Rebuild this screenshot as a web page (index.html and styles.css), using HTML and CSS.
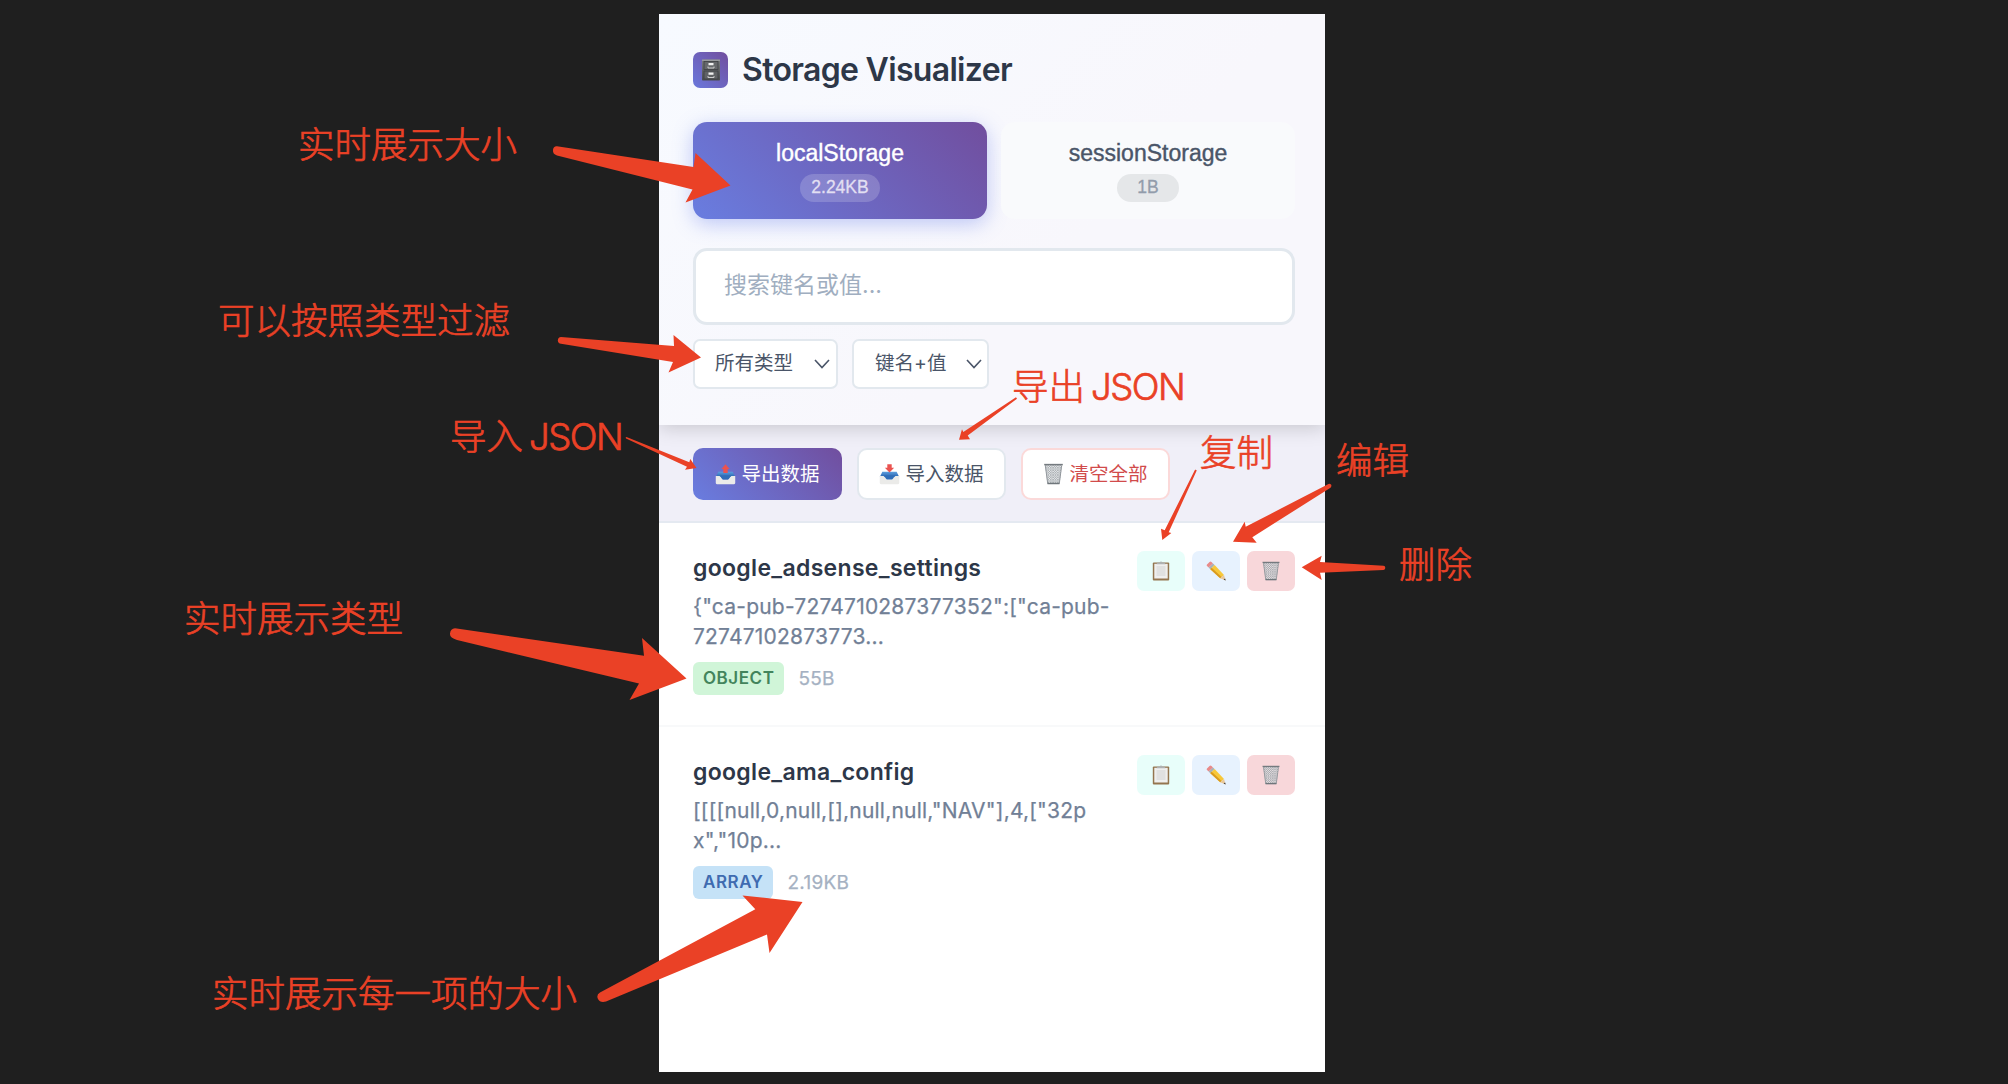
FILE: index.html
```html
<!DOCTYPE html>
<html lang="zh-CN">
<head>
<meta charset="utf-8">
<title>Storage Visualizer</title>
<link rel="stylesheet" href="styles.css">
</head>
<body>
<svg class="sprite" aria-hidden="true">
  <defs>
    <linearGradient id="steel" x1="0" x2="0" y1="0" y2="1"><stop offset="0" stop-color="#7b7d80"/><stop offset="1" stop-color="#4a4c4f"/></linearGradient>
    <linearGradient id="blue" x1="0" x2="0" y1="0" y2="1"><stop offset="0" stop-color="#5d9fe0"/><stop offset="1" stop-color="#2a66b0"/></linearGradient>
    <pattern id="mesh" width="2.4" height="2.4" patternUnits="userSpaceOnUse"><path d="M0 0L2.4 2.4M2.4 0L0 2.4" stroke="#8d9499" stroke-width=".5"/></pattern>
    <symbol id="cabinet" viewBox="0 0 20 22">
      <rect x="1" y=".5" width="18" height="21" rx=".8" fill="url(#steel)"/>
      <path d="M1 1.2h18" stroke="#a7a9ab" stroke-width="1"/>
      <rect x="3" y="2.5" width="14" height="8" fill="#66686b" stroke="#3d3f42" stroke-width=".8"/>
      <rect x="3" y="12" width="14" height="8" fill="#606265" stroke="#3d3f42" stroke-width=".8"/>
      <path d="M7.5 4h5v2.2h-5zM7.5 13.5h5v2.2h-5z" fill="#f1f1f1"/>
      <path d="M7 7.5v1.5h6V7.5M7 17v1.5h6V17" fill="none" stroke="#c9cacb" stroke-width="1"/>
    </symbol>
    <symbol id="tray" viewBox="0 0 22 22">
      <path d="M3.500 8h15l2.700 5.500H.8z" fill="url(#blue)"/>
      <path d="M.8 12.500H5c1.500 0 2 3.800 4 3.800h4c2 0 2.500-3.800 4-3.800h4.200v7.500q0 1.200-1.200 1.200H2Q.8 21.200.8 20z" fill="#ebebe9"/>
      <path d="M3.500 12h15c-2.500 0-3.500 4.300-5.500 4.300H9c-2 0-3-4.300-5.500-4.300z" fill="#2f6db8"/>
    </symbol>
    <symbol id="outbox" viewBox="0 0 22 22">
      <use href="#tray"/>
      <path d="M11 .3L15.300 5.200H13.300V9.300H8.700V5.200H6.700z" fill="#ea5350"/>
    </symbol>
    <symbol id="inbox" viewBox="0 0 22 22">
      <use href="#tray"/>
      <path d="M8.700 .3h4.600v3.700h2.600L11 8.800 6.100 4h2.600z" fill="#ea5350"/>
    </symbol>
    <symbol id="basket" viewBox="0 0 20 22">
      <path d="M1.500 2h17L16 21H4z" fill="#dfe2e4" fill-opacity=".75"/>
      <path d="M1.500 2h17L16 21H4z" fill="url(#mesh)"/>
      <path d="M1.800 2.500L4.200 20.500M18.200 2.500L15.800 20.500" stroke="#8b9196" stroke-width=".9"/>
      <path d="M.7 1.600h18.600" stroke="#747a7f" stroke-width="1.500"/>
      <path d="M4 20.500h12" stroke="#6f767b" stroke-width="1.500"/>
    </symbol>
    <symbol id="clipboard" viewBox="0 0 18 20">
      <rect x=".8" y="1.500" width="16.400" height="18" rx="1" fill="#94754f"/>
      <rect x="2.300" y="2.800" width="13.400" height="14.700" fill="#efefee"/>
      <path d="M4.500 6h9M4.500 8h9M4.500 10h9M4.500 12h9M4.500 14h9" stroke="#d2d3d3" stroke-width="1"/>
      <path d="M4.500 3.200h9l-1-1.700H10.500Q9-.4 7.500 1.500H5.500z" fill="#aeb1b2"/>
    </symbol>
    <symbol id="pencil" viewBox="0 0 20 20">
      <path d="M1 3.500L3.500 1Q4.500 0 5.500 1L7 2.500 2.700 6.500 1 5Q.2 4.200 1 3.500z" fill="#e98a8a"/>
      <path d="M2.700 6.500L7 2.500 8.600 4.100 4.300 8.200z" fill="#a9b0b5"/>
      <path d="M4.300 8.200L8.600 4.100 18 14 14.200 17.200z" fill="#f7c83a"/>
      <path d="M4.300 8.200L5.700 6.800 15.500 16.100 14.200 17.200z" fill="#d99a1f"/>
      <path d="M14.200 17.200L18 14 19.600 19.400z" fill="#e8c79a"/>
      <path d="M17.600 18.600L19.100 17.500 19.700 19.600z" fill="#333"/>
    </symbol>
  </defs>
</svg>

<main class="panel">
  <header class="header">
    <div class="brand">
      <span class="logo"><svg width="20" height="22"><use href="#cabinet"/></svg></span>
      <h1 class="title">Storage Visualizer</h1>
    </div>
    <div class="tabs">
      <button class="tab tab-active"><span class="tab-name">localStorage</span><span class="pill">2.24KB</span></button>
      <button class="tab"><span class="tab-name">sessionStorage</span><span class="pill pill-wide">1B</span></button>
    </div>
    <div class="search">搜索键名或值...</div>
    <div class="filters">
      <div class="select select-type"><span>所有类型</span><svg class="chevron" viewBox="0 0 16 10"><path d="M1 1l7 7.500L15 1"/></svg></div>
      <div class="select select-scope"><span>键名+值</span><svg class="chevron" viewBox="0 0 16 10"><path d="M1 1l7 7.500L15 1"/></svg></div>
    </div>
  </header>

  <section class="toolbar">
    <button class="btn btn-primary"><svg width="21" height="21"><use href="#outbox"/></svg><span>导出数据</span></button>
    <button class="btn"><svg width="21" height="21"><use href="#inbox"/></svg><span>导入数据</span></button>
    <button class="btn btn-danger"><svg width="21" height="22"><use href="#basket"/></svg><span>清空全部</span></button>
  </section>

  <section class="list">
    <article class="item">
      <div class="info">
        <h2 class="key">google_adsense_settings</h2>
        <p class="value">{"ca-pub-7274710287377352":["ca-pub-<br>72747102873773...</p>
        <div class="meta"><span class="badge badge-object">OBJECT</span><span class="size">55B</span></div>
      </div>
      <div class="actions">
        <button class="act act-copy"><svg width="18" height="20"><use href="#clipboard"/></svg></button>
        <button class="act act-edit"><svg width="20" height="20"><use href="#pencil"/></svg></button>
        <button class="act act-delete"><svg width="20" height="20"><use href="#basket"/></svg></button>
      </div>
    </article>
    <article class="item">
      <div class="info">
        <h2 class="key">google_ama_config</h2>
        <p class="value">[[[[null,0,null,[],null,null,"NAV"],4,["32p<br>x","10p...</p>
        <div class="meta"><span class="badge badge-array">ARRAY</span><span class="size">2.19KB</span></div>
      </div>
      <div class="actions">
        <button class="act act-copy"><svg width="18" height="20"><use href="#clipboard"/></svg></button>
        <button class="act act-edit"><svg width="20" height="20"><use href="#pencil"/></svg></button>
        <button class="act act-delete"><svg width="20" height="20"><use href="#basket"/></svg></button>
      </div>
    </article>
  </section>
</main>

<svg class="arrows" viewBox="0 0 2008 1084">
  <path d="M557 146.300L693.500 167 695.500 153 730.500 185.500 685.500 202.500 692.500 189.500 557 155.500Q552.500 154 553 150Q553.500 146 557 146.300z"/>
  <path d="M561 337L674 346 673.500 335 701 357.500 668.500 372.500 673 362 561 343.800Q558 343.300 557.800 340.500Q558 337 561 337z"/>
  <path d="M626.500 437L689.300 462.300 690.300 459 696.500 468 685 469.700 687 466.700 626 438.600Q625 437.300 626.500 437z"/>
  <path d="M1016 397.300L963.300 432 962 429.300 959 439.700 970 439.300 967.700 435.500 1017 398.700z"/>
  <path d="M1195 469.800L1164.700 530.300 1161 528.700 1162.300 540 1171.300 533 1168.700 532.300 1196.700 470.500Q1196.200 469.300 1195 469.800z"/>
  <path d="M1328.500 484L1245.700 526.700 1244.700 521.700 1233 541.700 1256.700 542.700 1252.300 537.300 1330.500 487.700Q1332 486 1331 484.600Q1330 483.500 1328.500 484z"/>
  <path d="M1383.500 565.800L1320 562 1321.700 555.700 1301.700 567.300 1321.700 580 1320 572.700 1383.500 570Q1385.500 569.500 1385.300 567.800Q1385.200 566 1383.500 565.800z"/>
  <path d="M455 628.200L644 655.700 642 638 686.500 678.500 629.500 700 639 683.500 457 640Q449.500 638 450 633.500Q450.500 628.500 455 628.200z"/>
  <path d="M600 992.500L755.300 909.200 742.500 895.500 802.500 902 769.500 953 767 934.500 606 1001.500Q600 1003 598 999Q596 995 600 992.500z"/>
</svg>
<div class="note n-total">实时展示大小</div>
<div class="note n-filter">可以按照类型过滤</div>
<div class="note n-import">导入<span class="latin">JSON</span></div>
<div class="note n-export">导出<span class="latin">JSON</span></div>
<div class="note n-copy">复制</div>
<div class="note n-edit">编辑</div>
<div class="note n-delete">删除</div>
<div class="note n-type">实时展示类型</div>
<div class="note n-size">实时展示每一项的大小</div>
</body>
</html>
```
FILE: styles.css
```css
* { box-sizing: border-box; }
body {
  margin: 0;
  height: 1084px;
  padding-top: 14px;
  background: #1f1f1f;
  position: relative;
  overflow: hidden;
  font-family: Inter, "Noto Sans CJK SC", sans-serif;
}
button { font: inherit; border: 0; padding: 0; margin: 0; }
h1, h2, p { margin: 0; }
.sprite { position: absolute; width: 0; height: 0; }

.panel {
  width: 666px;
  height: 1058px;
  margin-left: 659px;
  background: #fff;
  display: flex;
  flex-direction: column;
}
.header {
  height: 411px;
  padding: 38px 30px 0 34px;
  background: linear-gradient(135deg, #f7faff 0%, #f8f7fc 60%, #f8f7fc 100%);
  box-shadow: 0 3px 18px rgba(0, 0, 0, .17);
  clip-path: inset(0 0 -30px 0);
  position: relative;
}
.brand { display: flex; align-items: center; gap: 14px; height: 36px; }
.logo {
  width: 35px;
  height: 36px;
  border-radius: 7px;
  background: linear-gradient(45deg, #6a78dc, #714e9e);
  display: flex;
  align-items: center;
  justify-content: center;
}
.title { font-size: 32px; line-height: 36px; font-weight: 600; letter-spacing: -.68px; color: #2d3748; }
.tabs { display: flex; gap: 14px; margin-top: 34px; }
.tab {
  width: 294px;
  height: 97px;
  border-radius: 14px;
  background: #f9fafc;
  color: #4a5568;
  display: flex;
  flex-direction: column;
  align-items: center;
  padding-top: 18px;
  font-family: "Liberation Sans", sans-serif;
}
.tab-active { background: linear-gradient(45deg, #697de0, #714e9e); color: #fff; box-shadow: 0 5px 20px rgba(102, 126, 234, .4); }
.tab-name { font-size: 23px; line-height: 27px; -webkit-text-stroke: .4px currentColor; }
.pill {
  margin-top: 7px;
  height: 28px;
  padding: 0 11px;
  border-radius: 14px;
  font-size: 17.500px;
  line-height: 27px;
  background: #e5e7e9;
  color: #929cab;
  -webkit-text-stroke: .3px currentColor;
}
.pill-wide { padding: 0 20px; }
.tab-active .pill { background: rgba(255, 255, 255, .18); color: #e2dff2; }
.search {
  width: 602px;
  height: 77px;
  margin-top: 29px;
  padding-left: 28px;
  border: 3px solid #e2e8ee;
  border-radius: 14px;
  background: #fff;
  color: #a0aec0;
  font-size: 23px;
  line-height: 69px;
}
.filters { display: flex; gap: 14px; margin-top: 14px; }
.select {
  height: 50px;
  border: 2px solid #e2e8ee;
  border-radius: 7px;
  background: #fff;
  color: #4a5568;
  font-size: 19.500px;
  line-height: 28px;
  display: flex;
  align-items: center;
  justify-content: space-between;
  padding: 0 6px 0 20px;
}
.select span { padding-bottom: 3px; }
.select-type { width: 145px; }
.select-scope { width: 137px; padding-left: 21px; padding-right: 5px; }
.chevron { width: 16px; height: 10px; fill: none; stroke: #4a5568; stroke-width: 1.600; }

.toolbar {
  height: 98px;
  padding: 23px 34px 0;
  display: flex;
  gap: 15px;
  background: #f0eff8;
  border-bottom: 2px solid #e4e9f1;
}
.btn {
  width: 149px;
  height: 52px;
  border: 2px solid #e2e8ee;
  border-radius: 10px;
  background: #fff;
  color: #4a5568;
  font-size: 19.500px;
  display: flex;
  align-items: center;
  justify-content: center;
  gap: 5px;
}
.btn span { padding-bottom: 3px; }
.btn-primary { border: 0; background: linear-gradient(45deg, #697de0, #714e9e); color: #fff; }
.btn-danger { border-color: #fbd9d9; color: #d14b4b; }

.item {
  height: 204px;
  padding: 28px 30px 0 34px;
  display: flex;
  justify-content: space-between;
  border-bottom: 2px solid #f8f9fa;
}
.item:last-child { border-bottom: 0; }
.key { margin-top: 2px; font-size: 23px; line-height: 30px; font-weight: 600; letter-spacing: .32px; color: #2d3748; }
.value { margin-top: 9px; font-size: 21px; line-height: 30px; letter-spacing: .21px; color: #718096; white-space: nowrap; -webkit-text-stroke: .25px currentColor; }
.meta { display: flex; align-items: center; gap: 14px; margin-top: 10px; }
.badge {
  height: 33px;
  padding: 0 10px;
  border-radius: 6px;
  font-size: 17px;
  line-height: 33px;
  font-weight: 600;
  letter-spacing: .55px;
}
.badge-object { background: #d0f5d8; color: #43845c; }
.badge-array { background: #c5e2f7; color: #3f6bb0; }
.size { font-size: 19px; line-height: 33px; letter-spacing: .25px; color: #a5b1c2; -webkit-text-stroke: .25px currentColor; }
.actions { display: flex; gap: 7px; }
.act { width: 48px; height: 40px; border-radius: 7px; display: flex; align-items: center; justify-content: center; }
.act-copy { background: #e8fefa; }
.act-edit { background: #e7f2fe; }
.act-delete { background: #f8d7da; }

/* Callouts laid over the panel */
.arrows { position: absolute; inset: 0; width: 2008px; height: 1084px; fill: #ea4126; }
.note {
  position: absolute;
  font-size: 36.500px;
  line-height: 44px;
  font-weight: 300;
  color: #ea4126;
  -webkit-text-stroke: .7px currentColor;
  white-space: nowrap;
  font-family: "Noto Sans CJK SC", sans-serif;
}
.latin { font-family: Inter, sans-serif; margin-left: 6px; letter-spacing: -1.500px; }
.n-total { left: 298px; top: 121px; }
.n-filter { left: 218px; top: 297px; }
.n-import { left: 450px; top: 413px; }
.n-export { left: 1012px; top: 363px; }
.n-copy { left: 1200px; top: 429px; }
.n-edit { left: 1336px; top: 437px; }
.n-delete { left: 1399px; top: 541px; }
.n-type { left: 184px; top: 595px; }
.n-size { left: 212px; top: 970px; }
```
